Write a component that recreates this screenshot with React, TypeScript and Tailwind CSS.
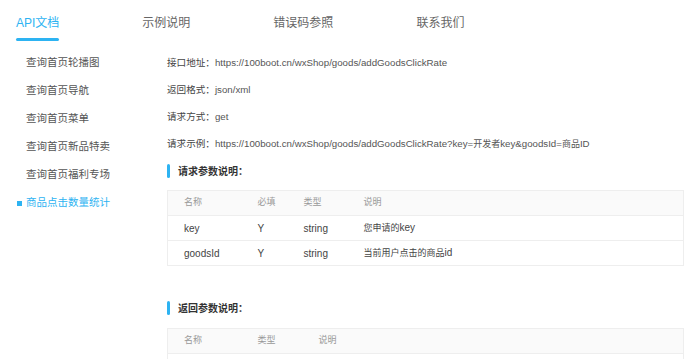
const tabs = ["API文档", "示例说明", "错误码参照", "联系我们"];

const menu = [
  "查询首页轮播图",
  "查询首页导航",
  "查询首页菜单",
  "查询首页新品特卖",
  "查询首页福利专场",
  "商品点击数量统计",
];

function Cn({ children }: { children: string }) {
  return <span className="text-[9px]">{children}</span>;
}

function SectionTitle({ title }: { title: string }) {
  return (
    <div className="flex items-center gap-2 h-4">
      <span className="w-[3px] h-[14px] rounded-sm bg-[#2db3f2]" />
      <span className="text-[10px] font-bold text-[#333]">{title}</span>
    </div>
  );
}

export default function App() {
  const info = [
    { label: "接口地址：", value: <>https://100boot.cn/wxShop/goods/addGoodsClickRate</> },
    { label: "返回格式：", value: <>json/xml</> },
    { label: "请求方式：", value: <>get</> },
    {
      label: "请求示例：",
      value: (
        <>
          https://100boot.cn/wxShop/goods/addGoodsClickRate?key=<Cn>开发者</Cn>key&amp;goodsId=<Cn>商品</Cn>ID
        </>
      ),
    },
  ];

  return (
    <div
      className="w-[700px] h-[359px] overflow-hidden bg-white"
      style={{ fontFamily: '"Liberation Sans", "Noto Sans CJK SC", sans-serif' }}
    >
      {/* --- Top Tabs --- */}
      <div className="flex gap-[83px] pl-4 pt-[14px] h-[42px]">
        {tabs.map((t, i) => (
          <div key={t} className="flex flex-col">
            <span className={`text-[12px] leading-[18px] ${i === 0 ? "text-[#2db3f2]" : "text-[#666]"}`}>
              {t}
            </span>
            {i === 0 && <span className="mt-[6px] h-[3px] rounded-full bg-[#2db3f2]" />}
          </div>
        ))}
      </div>

      <div className="flex">
        {/* --- Sidebar --- */}
        <div className="w-[167px] shrink-0 pt-[7px] pl-[17px]">
          {menu.map((m, i) => {
            const active = i === menu.length - 1;
            return (
              <div key={m} className="flex items-center h-[28px]">
                <span className={`w-[5px] h-[5px] mr-[4px] ${active ? "bg-[#2db3f2]" : ""}`} />
                <span className={`text-[10.5px] ${active ? "text-[#2db3f2]" : "text-[#555]"}`}>{m}</span>
              </div>
            );
          })}
        </div>

        {/* --- Content --- */}
        <div className="flex-1 pr-4 pt-[8px]">
          {info.map((r) => (
            <div key={r.label} className="flex items-center h-[27px] whitespace-nowrap">
              <span className="text-[9.6px] text-[#444]">{r.label}</span>
              <span className="text-[9.7px] text-[#555]">{r.value}</span>
            </div>
          ))}

          <div className="mt-[5px]">
            <SectionTitle title="请求参数说明：" />
          </div>
          <table className="mt-[11px] w-full border border-[#eee] text-[10px] border-collapse">
            <thead>
              <tr className="bg-[#fafafa] h-[25px] text-[#999] text-[9px]">
                <th className="font-normal text-left pl-4 w-[90px]">名称</th>
                <th className="font-normal text-left w-[46px]">必填</th>
                <th className="font-normal text-left w-[60px]">类型</th>
                <th className="font-normal text-left">说明</th>
              </tr>
            </thead>
            <tbody className="text-[#444]">
              <tr className="h-[25px] border-t border-[#eee]">
                <td className="pl-4">key</td>
                <td>Y</td>
                <td>string</td>
                <td>
                  <Cn>您申请的</Cn>key
                </td>
              </tr>
              <tr className="h-[25px] border-t border-[#eee]">
                <td className="pl-4">goodsId</td>
                <td>Y</td>
                <td>string</td>
                <td>
                  <Cn>当前用户点击的商品</Cn>id
                </td>
              </tr>
            </tbody>
          </table>

          <div className="mt-[34px]">
            <SectionTitle title="返回参数说明：" />
          </div>
          <table className="mt-[12px] w-full border border-[#eee] text-[9px] border-collapse">
            <thead>
              <tr className="bg-[#fafafa] h-[25px] text-[#999]">
                <th className="font-normal text-left pl-4 w-[90px]">名称</th>
                <th className="font-normal text-left w-[61px]">类型</th>
                <th className="font-normal text-left">说明</th>
              </tr>
            </thead>
            <tbody>
              <tr className="h-[25px] border-t border-[#eee]">
                <td className="pl-4" />
                <td />
                <td />
              </tr>
            </tbody>
          </table>
        </div>
      </div>
    </div>
  );
}
